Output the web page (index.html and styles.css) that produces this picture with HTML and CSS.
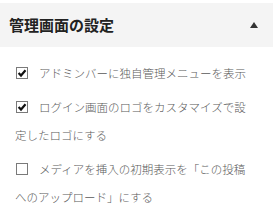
FILE: index.html
```html
<!DOCTYPE html>
<html lang="ja">
<head>
    <meta charset="UTF-8">
    <title>管理画面の設定</title>
    <link rel="stylesheet" href="styles.css">
</head>
<body>
    <div class="panel">
        <div class="panel-head">
            <h2 class="panel-title">管理画面の設定</h2>
            <span class="toggle"></span>
        </div>
        <div class="panel-body">
            <p class="option"><span class="box"><svg viewBox="0 0 10 10" width="10" height="10"><path d="M1.6 5 L4 7.5 L8.5 2.3" fill="none" stroke="#111" stroke-width="2.2"/></svg></span>アドミンバーに独自管理メニューを表示</p>
            <p class="option"><span class="box"><svg viewBox="0 0 10 10" width="10" height="10"><path d="M1.6 5 L4 7.5 L8.5 2.3" fill="none" stroke="#111" stroke-width="2.2"/></svg></span>ログイン画面のロゴをカスタマイズで設定したロゴにする</p>
            <p class="option"><span class="box"></span>メディアを挿入の初期表示を「この投稿へのアップロード」にする</p>
        </div>
    </div>
</body>
</html>
```

FILE: styles.css
```css
body {
    margin: 0;
    background-color: #fff;
    font-family: "Noto Sans CJK JP", "Noto Sans", sans-serif;
}

.panel {
    padding-top: 3px;
}

.panel-head {
    display: flex;
    justify-content: space-between;
    align-items: center;
    height: 44px;
    padding: 0 15px 0 9px;
    background-color: #f4f4f4;
}

.panel-title {
    margin: 0;
    font-size: 15px;
    line-height: 18px;
    font-weight: bold;
    color: #222;
}

.toggle {
    width: 0;
    height: 0;
    border-left: 4px solid transparent;
    border-right: 4px solid transparent;
    border-bottom: 6px solid #333;
}

.panel-body {
    padding: 12px 18px 0 15px;
}

.option {
    margin: 0 0 6px;
    font-size: 11.5px;
    font-weight: 300;
    line-height: 28px;
    color: #5a5a5a;
}

.box {
    display: inline-block;
    box-sizing: border-box;
    width: 12px;
    height: 12px;
    margin: 0 11px 0 1px;
    border: 1px solid #7a7a7a;
    background-color: #fff;
    vertical-align: -1px;
}

.box svg {
    display: block;
}
```
